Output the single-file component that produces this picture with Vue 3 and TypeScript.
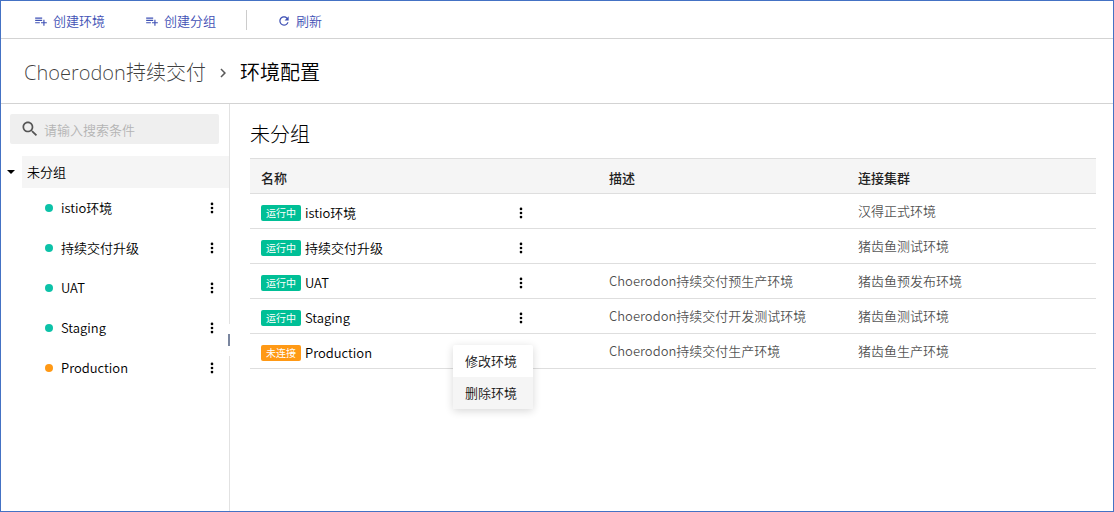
<script setup lang="ts">
import { ref } from 'vue'

type Status = 'running' | 'disconnected'

interface Environment {
  id: number
  name: string
  status: Status
  description: string
  cluster: string
}

const statusText: Record<Status, string> = {
  running: '运行中',
  disconnected: '未连接',
}

const environments: Environment[] = [
  { id: 1, name: 'istio环境', status: 'running', description: '', cluster: '汉得正式环境' },
  { id: 2, name: '持续交付升级', status: 'running', description: '', cluster: '猪齿鱼测试环境' },
  { id: 3, name: 'UAT', status: 'running', description: 'Choerodon持续交付预生产环境', cluster: '猪齿鱼预发布环境' },
  { id: 4, name: 'Staging', status: 'running', description: 'Choerodon持续交付开发测试环境', cluster: '猪齿鱼测试环境' },
  { id: 5, name: 'Production', status: 'disconnected', description: 'Choerodon持续交付生产环境', cluster: '猪齿鱼生产环境' },
]

const keyword = ref('')
const expanded = ref(true)
const openMenu = ref<number | null>(4)

function toggleMenu(id: number) {
  openMenu.value = openMenu.value === id ? null : id
}
</script>

<template>
  <div class="shell">
    <div class="toolbar" role="toolbar">
      <button type="button" class="tool">
        <svg class="tool-icon" viewBox="0 0 24 24"><path d="M14 10H2v2h12v-2zm0-4H2v2h12V6zm4 8v-4h-2v4h-4v2h4v4h2v-4h4v-2h-4zM2 16h8v-2H2v2z" /></svg>
        创建环境
      </button>
      <button type="button" class="tool second">
        <svg class="tool-icon" viewBox="0 0 24 24"><path d="M14 10H2v2h12v-2zm0-4H2v2h12V6zm4 8v-4h-2v4h-4v2h4v4h2v-4h4v-2h-4zM2 16h8v-2H2v2z" /></svg>
        创建分组
      </button>
      <span class="divider"></span>
      <button type="button" class="tool">
        <svg class="tool-icon" viewBox="0 0 24 24"><path d="M17.65 6.35C16.2 4.9 14.21 4 12 4c-4.42 0-7.99 3.58-7.99 8s3.57 8 7.99 8c3.73 0 6.84-2.55 7.73-6h-2.08c-.82 2.33-3.04 4-5.65 4-3.31 0-6-2.69-6-6s2.69-6 6-6c1.66 0 3.14.69 4.22 1.78L13 11h7V4l-2.35 2.35z" /></svg>
        刷新
      </button>
    </div>

    <nav class="breadcrumb">
      <a href="#" class="crumb">Choerodon持续交付</a>
      <svg class="chevron" viewBox="0 0 24 24"><path d="M10 6L8.59 7.41 13.17 12l-4.58 4.59L10 18l6-6z" /></svg>
      <span class="current">环境配置</span>
    </nav>

    <div class="body">
      <aside class="sidebar">
        <label class="search">
          <svg class="search-icon" viewBox="0 0 24 24"><path d="M15.5 14h-.79l-.28-.27C15.41 12.59 16 11.11 16 9.5 16 5.91 13.09 3 9.5 3S3 5.91 3 9.5 5.91 16 9.5 16c1.61 0 3.09-.59 4.23-1.57l.27.28v.79l5 4.99L20.49 19l-4.99-5zm-6 0C7.01 14 5 11.99 5 9.5S7.01 5 9.5 5 14 7.01 14 9.5 11.99 14 9.5 14z" /></svg>
          <input v-model="keyword" type="text" placeholder="请输入搜索条件" aria-label="请输入搜索条件" />
        </label>
        <div class="group">
          <button type="button" class="caret" aria-label="未分组" :aria-expanded="expanded" @click="expanded = !expanded">
            <svg viewBox="0 0 8 4"><path d="M0 0h8L4 4z" /></svg>
          </button>
          <span class="group-name">未分组</span>
        </div>
        <ul v-if="expanded" class="tree">
          <li v-for="env in environments" :key="env.id" class="node">
            <span class="dot" :class="env.status"></span>
            <span class="node-name">{{ env.name }}</span>
            <button type="button" class="more" :aria-label="env.name">
              <svg viewBox="0 0 24 24"><circle cx="12" cy="5" r="2.3" /><circle cx="12" cy="12" r="2.3" /><circle cx="12" cy="19" r="2.3" /></svg>
            </button>
          </li>
        </ul>
        <span class="resizer"></span>
      </aside>

      <main class="content">
        <h2>未分组</h2>
        <table>
          <colgroup>
            <col />
            <col class="col-side" />
            <col class="col-side" />
          </colgroup>
          <thead>
            <tr>
              <th scope="col">名称</th>
              <th scope="col">描述</th>
              <th scope="col">连接集群</th>
            </tr>
          </thead>
          <tbody>
            <tr v-for="env in environments" :key="env.id">
              <td class="name-cell">
                <div class="name-wrap">
                  <span class="badge" :class="env.status">{{ statusText[env.status] }}</span>
                  <span class="env-name">{{ env.name }}</span>
                  <div class="action">
                    <button v-if="env.id !== 5" type="button" class="more" :aria-label="env.name" @click="toggleMenu(env.id)">
                      <svg viewBox="0 0 24 24"><circle cx="12" cy="5" r="2.3" /><circle cx="12" cy="12" r="2.3" /><circle cx="12" cy="19" r="2.3" /></svg>
                    </button>
                    <div v-if="openMenu === env.id" class="menu" role="menu">
                      <button type="button" role="menuitem">修改环境</button>
                      <button type="button" role="menuitem" class="active">删除环境</button>
                    </div>
                  </div>
                </div>
              </td>
              <td>{{ env.description }}</td>
              <td>{{ env.cluster }}</td>
            </tr>
          </tbody>
        </table>
      </main>
    </div>
  </div>
</template>

<style>
body {
  margin: 0;
}
</style>

<style scoped>
.shell {
  box-sizing: border-box;
  min-height: 100vh;
  display: flex;
  flex-direction: column;
  border: 1px solid #4472c4;
  background: #fff;
  color: #000;
  font-family: "Noto Sans CJK SC", sans-serif;
  font-size: 13px;
  font-weight: 350;
  line-height: 20px;
}

button {
  padding: 0;
  border: 0;
  background: none;
  color: inherit;
  font: inherit;
  cursor: pointer;
}

svg {
  display: block;
  fill: currentColor;
}

.toolbar {
  display: flex;
  align-items: center;
  height: 37px;
  padding-left: 33px;
  border-bottom: 1px solid #d3d3d3;
}

.tool {
  display: flex;
  align-items: center;
  gap: 5px;
  padding-top: 2px;
  color: #3f51b5;
}

.tool.second {
  margin-left: 40px;
}

.tool-icon {
  width: 14px;
  height: 14px;
}

.divider {
  width: 1px;
  height: 20px;
  margin: 0 30px;
  background: #ccc;
}

.breadcrumb {
  box-sizing: border-box;
  display: flex;
  align-items: center;
  height: 65px;
  padding: 3px 0 0 23px;
  border-bottom: 1px solid #d3d3d3;
  font-family: "Open Sans", "Noto Sans CJK SC", sans-serif;
  font-size: 20px;
  line-height: 28px;
}

.crumb {
  color: rgba(0, 0, 0, 0.75);
  font-weight: 300;
  text-decoration: none;
}

.chevron {
  width: 18px;
  height: 18px;
  margin: 0 8px;
  color: rgba(0, 0, 0, 0.65);
}

.body {
  flex: 1;
  display: flex;
}

.sidebar {
  position: relative;
  box-sizing: border-box;
  flex: none;
  width: 229px;
  padding-top: 10px;
  border-right: 1px solid #e2e2e2;
}

.search {
  display: flex;
  align-items: center;
  height: 30px;
  margin: 0 10px 12px 9px;
  padding-left: 10px;
  border-radius: 2px;
  background: #efefef;
}

.search-icon {
  flex: none;
  width: 20px;
  height: 20px;
  color: #555;
}

.search input {
  flex: 1;
  min-width: 0;
  margin-left: 4px;
  padding: 2px 0 0;
  border: 0;
  outline: 0;
  background: none;
  font: inherit;
}

.search input::placeholder {
  color: #b4b4b4;
  opacity: 1;
}

.group {
  display: flex;
  height: 32px;
}

.caret {
  box-sizing: border-box;
  flex: none;
  width: 21px;
  padding-right: 1px;
  display: flex;
  align-items: center;
  justify-content: center;
}

.caret svg {
  width: 8px;
  height: 4px;
}

.group-name {
  flex: 1;
  padding: 6px 5px;
  background: #f5f5f5;
}

.tree {
  margin: 0;
  padding: 0;
  list-style: none;
}

.node {
  display: flex;
  align-items: center;
  height: 40px;
  padding: 0 5px 0 44px;
}

.dot {
  width: 8px;
  height: 8px;
  margin-right: 8px;
  border-radius: 50%;
}

.dot.running {
  background: #0cc2a8;
}

.dot.disconnected {
  background: #ff9915;
}

.node-name {
  flex: 1;
}

.more {
  display: flex;
  align-items: center;
  justify-content: center;
  width: 24px;
  height: 24px;
}

.more svg {
  width: 14px;
  height: 14px;
}

.resizer {
  position: absolute;
  top: 220px;
  right: -1px;
  box-sizing: border-box;
  width: 2px;
  height: 32px;
  border: solid #fff;
  border-width: 10px 0;
  background: #7a869f;
}

.content {
  flex: 1;
  min-width: 0;
  padding: 16px 17px 20px 20px;
}

h2 {
  margin: 0 0 10px;
  font-size: 20px;
  font-weight: 300;
  line-height: 28px;
  color: #000;
}

table {
  width: 100%;
  table-layout: fixed;
  border-collapse: separate;
  border-spacing: 0;
  border-top: 1px solid #dedede;
}

.col-side {
  width: 249px;
}

th,
td {
  box-sizing: border-box;
  height: 35px;
  padding: 0 11px;
  border-bottom: 1px solid #dedede;
  text-align: left;
  color: rgba(0, 0, 0, 0.7);
}

th {
  padding-top: 4px;
  background: #f5f5f5;
  color: #222;
  font-weight: 500;
}

.name-cell {
  padding: 4px 65px 0 11px;
  color: #000;
}

.name-wrap {
  display: flex;
  align-items: center;
}

.badge {
  box-sizing: border-box;
  width: 40px;
  height: 16px;
  margin-right: 4px;
  border-radius: 2px;
  color: #fff;
  font-size: 10px;
  font-weight: 400;
  line-height: 16px;
  text-align: center;
}

.badge.running {
  background: #00bf96;
}

.badge.disconnected {
  background: #ff9915;
}

.env-name {
  flex: 1;
}

.action {
  position: relative;
}

.menu {
  position: absolute;
  top: 39px;
  right: 0;
  z-index: 1;
  width: 80px;
  overflow: hidden;
  border-radius: 2px;
  background: #fff;
  box-shadow: 0 2px 8px rgba(0, 0, 0, 0.16);
}

.menu button {
  display: block;
  width: 100%;
  height: 32px;
  padding: 0 12px;
  text-align: left;
  white-space: nowrap;
  color: #111;
}

.menu .active {
  background: #f5f5f5;
}
</style>
